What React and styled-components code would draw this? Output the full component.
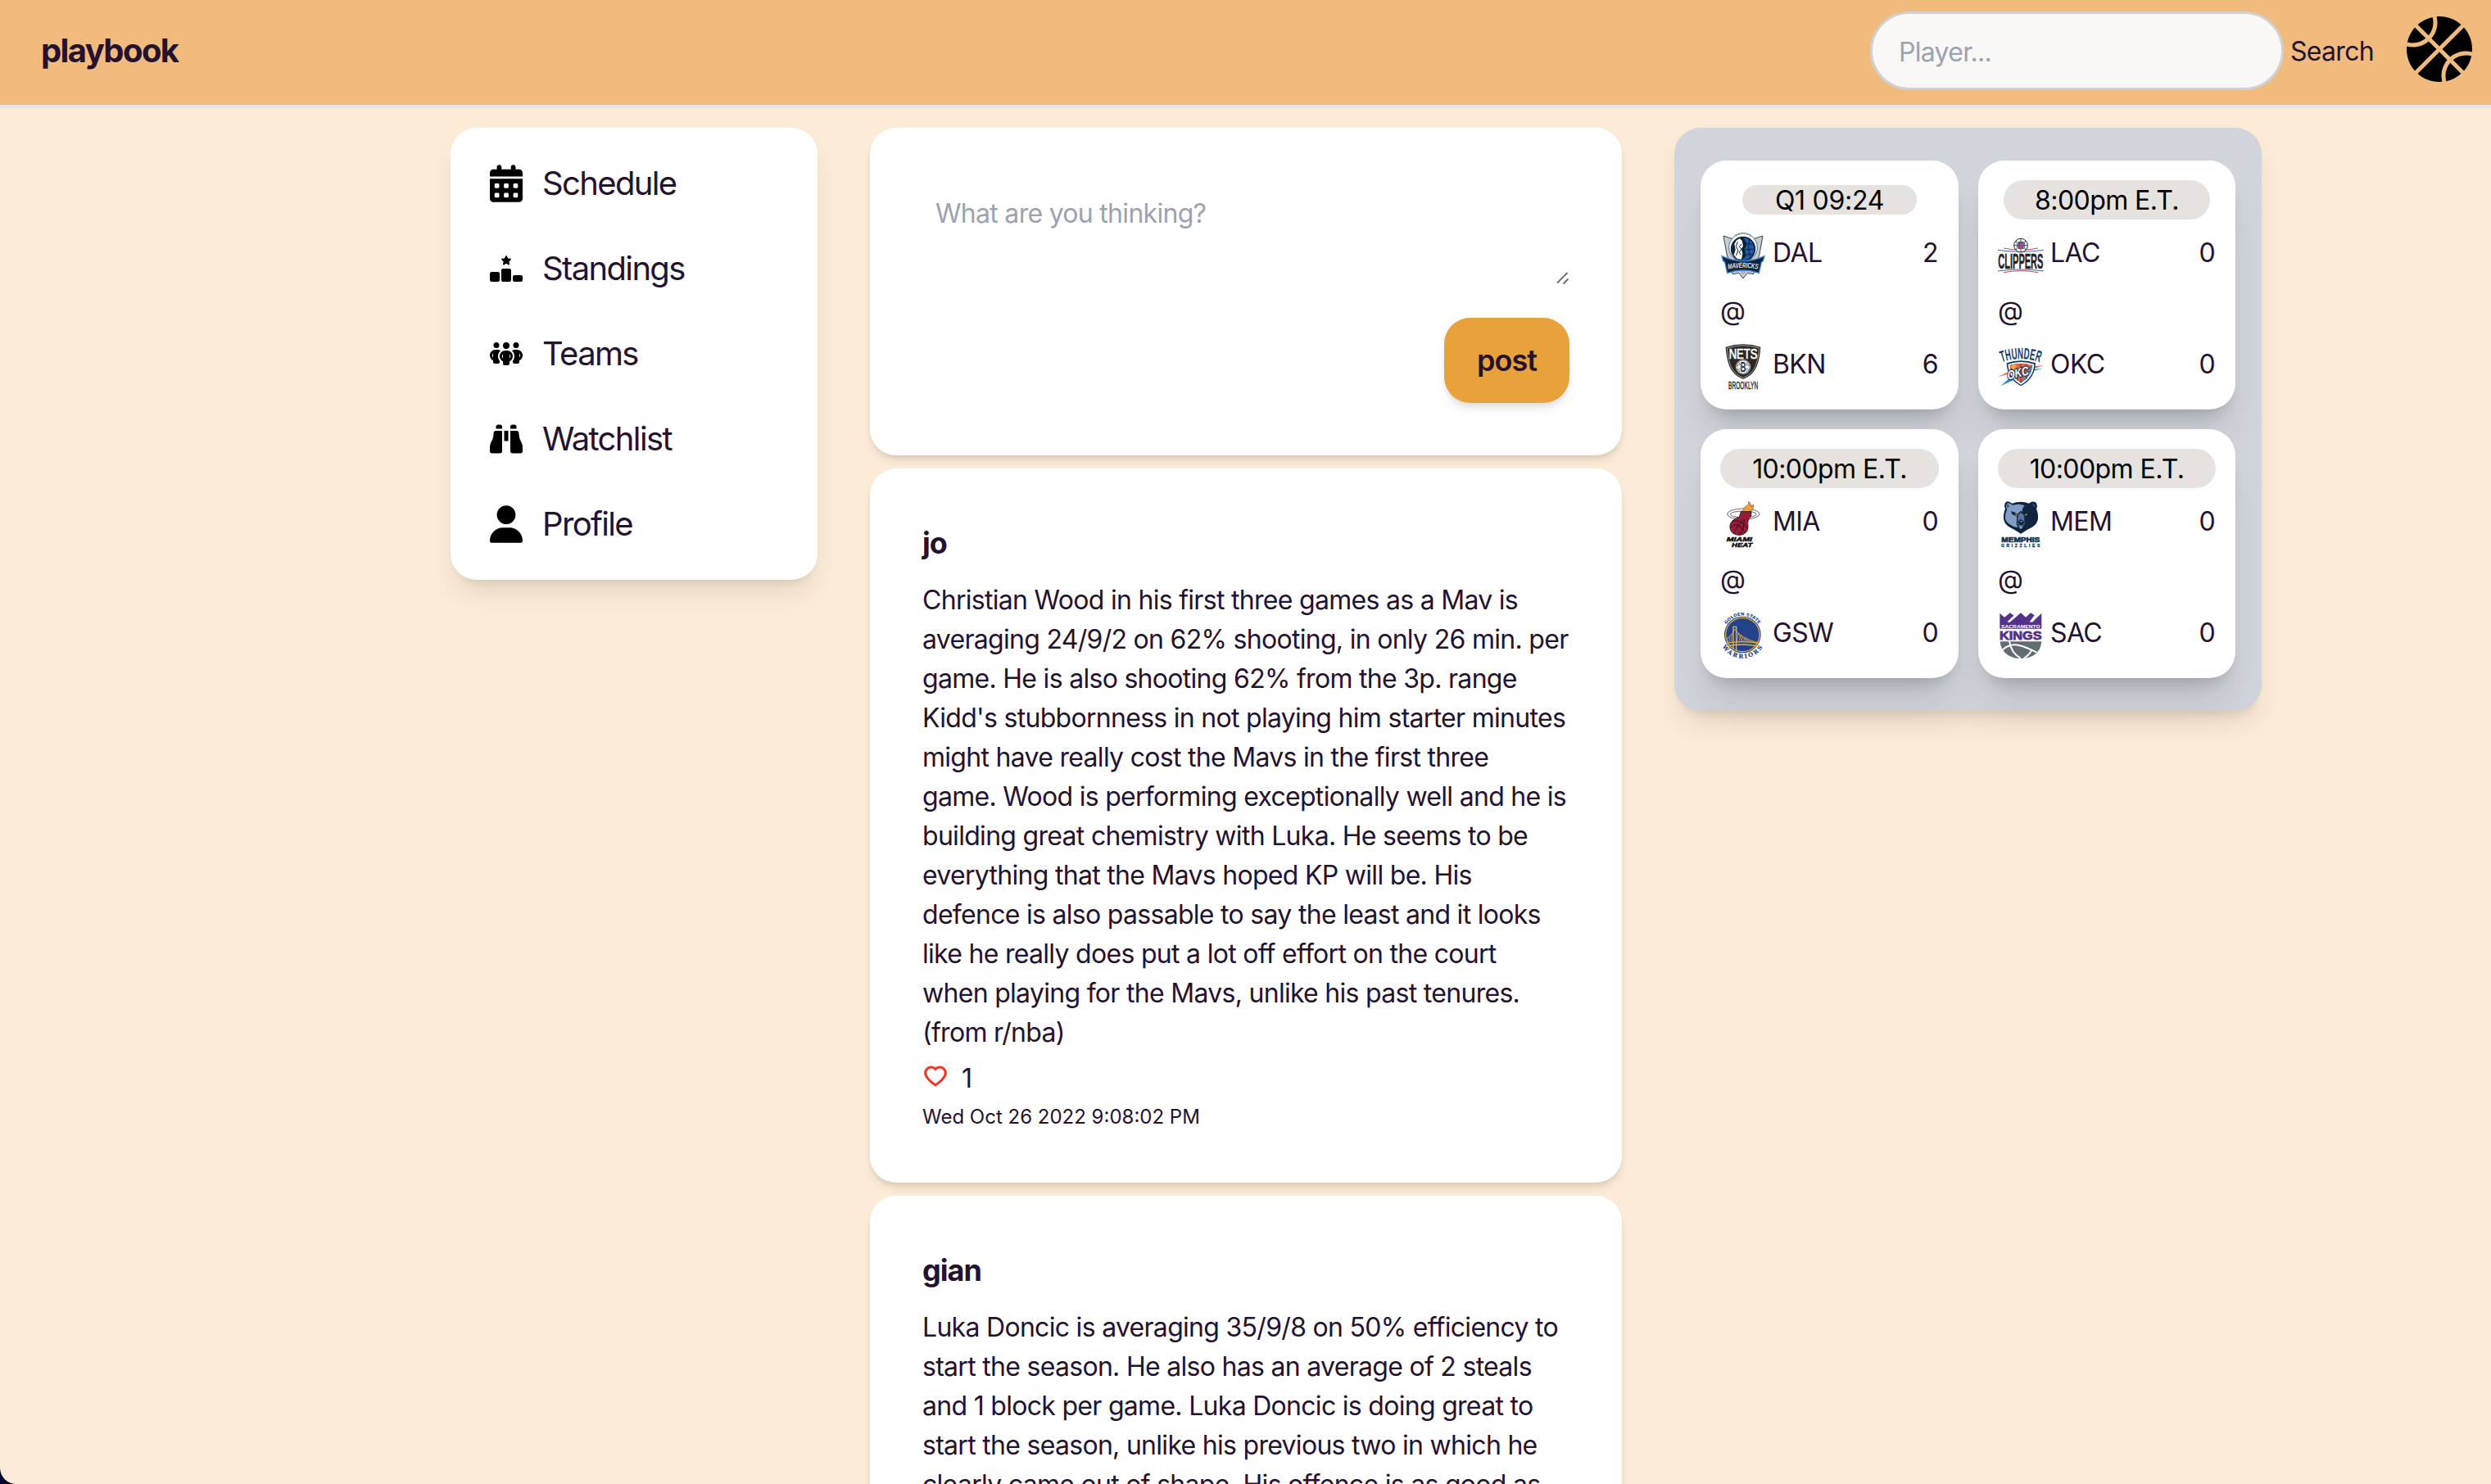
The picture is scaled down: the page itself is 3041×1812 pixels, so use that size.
import React from 'react';
import styled, { createGlobalStyle, css } from 'styled-components';
import {
  FaCalendarDays,
  FaRankingStar,
  FaPeopleGroup,
  FaBinoculars,
  FaUser,
  FaBasketball,
} from 'react-icons/fa6';
import { AiOutlineHeart } from 'react-icons/ai';

const ink = '#24122f';

const GlobalStyle = createGlobalStyle`
  *, *::before, *::after { box-sizing: border-box; }
  html { background: #0a0530; }
  body {
    margin: 0;
    overflow: hidden;
    color: ${ink};
    font-family: Inter, "Liberation Sans", sans-serif;
    font-size: 32px;
    line-height: 48px;
    letter-spacing: -0.022em;
  }
`;

const Page = styled.div`
  height: 1812px;
  overflow: hidden;
  background: #fcecd7;
  border-bottom-left-radius: 20px;
`;

const Header = styled.header`
  display: flex;
  align-items: center;
  justify-content: space-between;
  height: 132px;
  padding: 0 23px 4px 50px;
  background: #f2bb7e;
  border-bottom: 4px solid #e5e7eb;
`;

const Brand = styled.h1`
  margin: 0;
  font-size: 40px;
  line-height: 56px;
  font-weight: 700;
  letter-spacing: -0.04em;
`;

const SearchForm = styled.form`
  display: flex;
  align-items: center;
`;

const SearchInput = styled.input`
  width: 505px;
  height: 96px;
  margin-right: 8px;
  padding: 2px 32px 0;
  border: 3px solid #d1d1d4;
  border-radius: 50px;
  background: #f9f8f6;
  color: inherit;
  font: inherit;
  letter-spacing: inherit;
  &::placeholder { color: #9ca3af; opacity: 1; }
`;

const SearchButton = styled.button`
  width: 101px;
  margin-right: 41px;
  padding: 2px 0 0;
  border: 0;
  background: none;
  color: inherit;
  font: inherit;
  letter-spacing: inherit;
  text-align: left;
`;

const BallIcon = styled(FaBasketball)`
  width: 80px;
  height: 80px;
  margin-top: -4px;
  color: #000;
`;

const Main = styled.main`
  display: flex;
  align-items: flex-start;
  gap: 64px;
  padding: 24px 0 0 550px;
`;

const surface = css`
  background: #fff;
  border-radius: 32px;
`;

const Sidebar = styled.nav`
  ${surface}
  display: flex;
  flex-direction: column;
  gap: 48px;
  width: 448px;
  padding: 40px 48px;
  box-shadow: 0 20px 30px -6px rgba(0, 0, 0, 0.1), 0 8px 12px -8px rgba(0, 0, 0, 0.1);
`;

const NavItem = styled.a`
  display: flex;
  align-items: center;
  gap: 24px;
  height: 56px;
  font-size: 40px;
  line-height: 56px;
  letter-spacing: -0.041em;
  svg { width: 40px; height: ${(p) => p.$iconHeight}px; color: #000; }
`;

const Feed = styled.section`
  display: flex;
  flex-direction: column;
  gap: 16px;
  width: 918px;
`;

const Card = styled.article`
  ${surface}
  padding: 64px;
  box-shadow: 0 8px 12px -2px rgba(0, 0, 0, 0.1), 0 4px 8px -4px rgba(0, 0, 0, 0.1);
`;

const Composer = styled(Card)`
  display: flex;
  flex-direction: column;
  align-items: flex-end;
  height: 400px;
`;

const Field = styled.div`
  position: relative;
  width: 100%;
  height: 128px;
  margin-bottom: 40px;
`;

const PostInput = styled.textarea`
  display: block;
  width: 100%;
  height: 128px;
  padding: 17px 16px 15px;
  border: 0;
  resize: none;
  color: inherit;
  font: inherit;
  letter-spacing: inherit;
  background: none;
  &::placeholder { color: #9ca3af; opacity: 1; }
`;

const Grip = styled.svg`
  position: absolute;
  right: 0;
  bottom: 0;
`;

const PostButton = styled.button`
  width: 153px;
  height: 104px;
  padding: 0;
  border: 0;
  border-radius: 32px;
  background: #e8a13b;
  color: inherit;
  font-family: inherit;
  font-size: 36px;
  font-weight: 600;
  letter-spacing: -0.028em;
  box-shadow: 0 8px 12px -2px rgba(0, 0, 0, 0.1), 0 4px 8px -4px rgba(0, 0, 0, 0.1);
`;

const Author = styled.h2`
  margin: -1px 0 18px;
  font-size: 36px;
  line-height: 56px;
  font-weight: 700;
  letter-spacing: -0.028em;
`;

const Body = styled.p`
  margin: 0;
  white-space: pre;
`;

const Likes = styled.div`
  display: flex;
  align-items: center;
  gap: 16px;
  margin: 8px 0 7px;
  svg {
    width: 32px;
    height: 32px;
    margin-top: -6px;
    color: #ef3326;
    stroke-width: 24px;
  }
`;

const Time = styled.time`
  display: block;
  font-size: 24px;
  line-height: 32px;
  letter-spacing: 0;
`;

const Scoreboard = styled.aside`
  display: grid;
  grid-template-columns: 315px 314px;
  gap: 24px;
  width: 717px;
  padding: 40px 32px;
  border-radius: 32px;
  background: #d1d5db;
  box-shadow: 0 20px 30px -6px rgba(0, 0, 0, 0.1), 0 8px 12px -8px rgba(0, 0, 0, 0.1);
  letter-spacing: -0.018em;
`;

const Game = styled.div`
  ${surface}
  display: flex;
  flex-direction: column;
  gap: 16px;
  height: 304px;
  padding: 24px;
  box-shadow: 0 40px 50px -10px rgba(0, 0, 0, 0.1), 0 16px 20px -12px rgba(0, 0, 0, 0.2);
`;

const Clock = styled.div`
  display: flex;
  align-items: center;
  justify-content: center;
  align-self: center;
  width: ${(p) => p.$width}px;
  height: ${(p) => (p.$live ? 36 : 48)}px;
  margin: ${(p) => (p.$live ? 6 : 0)}px 0;
  padding-top: 2px;
  border-radius: 24px;
  background: #e5e2df;
  color: #000;
  letter-spacing: ${(p) => (p.$live ? '-0.009em' : '-0.018em')};
  white-space: nowrap;
`;

const TeamRow = styled.div`
  display: flex;
  align-items: flex-start;
  height: 56px;
`;

const TeamName = styled.span`
  flex: 1;
  margin: 1px 0 0 8px;
`;

const Score = styled.span`
  margin: 1px 1px 0 0;
`;

const Logo = styled.svg`
  width: 56px;
  height: 56px;
  overflow: visible;
  letter-spacing: 0;
`;

const LogoFrame = ({ children }) => <Logo viewBox="0 0 168 168">{children}</Logo>;

const condensed = '"Liberation Sans", sans-serif';

const Mavericks = () => (
  <LogoFrame>
    <path d="M12 12L42 22H126L156 12L144 78L122 152L100 148L84 168L68 148L46 152L24 78Z" fill="#c4ced4" stroke="#2b4450" strokeWidth="3" />
    <circle cx="84" cy="54" r="52" fill="#fff" stroke="#3d525d" strokeWidth="2.5" />
    <path id="dalArc" d="M50 22A44 44 0 0 1 118 22" fill="none" />
    <text fontFamily={condensed} fontSize="10" fontWeight="700" fill="#5d7078"><textPath href="#dalArc" startOffset="50%" textAnchor="middle" textLength="58">DALLAS</textPath></text>
    <circle cx="84" cy="60" r="43" fill="#1c5bab" stroke="#0c2340" strokeWidth="5" />
    <path d="M84 17A43 43 0 0 0 78 102L94 86L90 60L98 42L90 28Z" fill="#0b2230" />
    <path d="M72 22L80 30L84 48L78 60L82 78L78 98L62 96L50 82L56 62L52 42L60 28Z" fill="#fff" />
    <path d="M64 34L58 50L66 66L58 84M78 42L70 52L78 60L70 72L76 82" fill="none" stroke="#0b2230" strokeWidth="3" />
    <path d="M94 40Q112 38 124 48M94 62L127 60M94 82Q108 76 122 82M108 26Q98 54 112 96" fill="none" stroke="#0c2340" strokeWidth="3" />
    <path d="M6 86Q84 122 162 86L157 104L151 108L142 148Q84 128 26 148L17 108L11 104Z" fill="#0c2340" stroke="#3e83d0" strokeWidth="4" />
    <path id="dalBase" d="M29 134Q84 124 141 134" fill="none" />
    <text fontFamily={condensed} fontSize="27" fontWeight="700" fontStyle="italic" fill="#dfe6ea"><textPath href="#dalBase" textLength="110" lengthAdjust="spacingAndGlyphs">MAVERICKS</textPath></text>
    <circle cx="84" cy="146" r="5" fill="none" stroke="#6d7d86" strokeWidth="2" />
  </LogoFrame>
);

const Nets = () => (
  <LogoFrame>
    <path d="M20 11Q84-9 148 11Q146 50 134 82Q120 116 84 129Q48 116 34 82Q22 50 20 11Z" fill="#2b2823" />
    <path d="M25 15Q84-4 143 15Q141 50 130 80Q116 112 84 124Q52 112 38 80Q27 50 25 15Z" fill="none" stroke="#fff" strokeWidth="1.6" />
    <text x="84" y="53" textAnchor="middle" textLength="104" lengthAdjust="spacingAndGlyphs" fontFamily={condensed} fontSize="49" fill="#fff" stroke="#fff" strokeWidth="2">NETS</text>
    <circle cx="84" cy="84" r="27" fill="#fff" />
    <circle cx="84" cy="84" r="24" fill="none" stroke="#2b2823" strokeWidth="2" />
    <path d="M60 80Q84 66 108 80M61 96Q84 80 107 96M67 66Q84 86 69 102M101 66Q84 86 99 102" fill="none" stroke="#2b2823" strokeWidth="2" />
    <rect x="74" y="63" width="20" height="42" fill="#fff" />
    <text x="84" y="101" textAnchor="middle" textLength="20" lengthAdjust="spacingAndGlyphs" fontFamily={condensed} fontSize="48" fontWeight="700" fill="#2b2823">B</text>
    <text x="30" y="166" textLength="109" lengthAdjust="spacingAndGlyphs" fontFamily={condensed} fontSize="41" fill="#2b2823" stroke="#2b2823" strokeWidth="1.3">BROOKLYN</text>
  </LogoFrame>
);

const Clippers = () => (
  <LogoFrame>
    <path d="M0 64Q84 76 168 64M0 141Q84 129 168 141" fill="none" stroke="#3c68b5" strokeWidth="3" />
    <path d="M21 57Q84 70 147 57M21 146Q84 134 147 146" fill="none" stroke="#dc3d55" strokeWidth="3" />
    <circle cx="84" cy="47" r="25" fill="#fff" stroke="#242424" strokeWidth="3" />
    <path d="M84 22V72M59 47H109M66 30Q78 47 66 64M102 30Q90 47 102 64" fill="none" stroke="#242424" strokeWidth="2.5" />
    <rect x="74" y="33" width="21" height="27" fill="#2456ad" />
    <text x="85" y="56" textAnchor="middle" textLength="15" lengthAdjust="spacingAndGlyphs" fontFamily={condensed} fontSize="25" fontWeight="700" fill="#ef3a54" stroke="#ef3a54">B</text>
    <text x="1" y="131" textLength="165" lengthAdjust="spacingAndGlyphs" fontFamily={condensed} fontSize="78" fontWeight="700" fill="#242424" stroke="#242424" strokeWidth="1.5">CLIPPERS</text>
  </LogoFrame>
);

const Thunder = () => (
  <LogoFrame>
    <path id="okcArc" d="M14 67Q84 43 154 67" fill="none" />
    <text fontFamily={condensed} fontSize="58" fontWeight="700" fill="#143f70"><textPath href="#okcArc" textLength="142" lengthAdjust="spacingAndGlyphs">THUNDER</textPath></text>
    <path d="M2 119L40 101L36 111Z M168 79L128 82L132 90Z" fill="#ef6540" />
    <path d="M10 154L46 122L58 132Z M164 90L130 92L126 100Z" fill="#3288cd" />
    <path d="M32 70Q84 52 138 70Q136 128 84 154Q34 128 32 70Z" fill="#123a67" />
    <path d="M37 74Q84 58 133 74Q130 124 84 149Q40 124 37 74Z" fill="#fff" />
    <path d="M43 78Q84 64 127 78Q124 120 84 143Q46 120 43 78Z" fill="#ed6239" />
    <path d="M121 77L127 78Q124 120 84 143L80 140Q116 116 121 77Z" fill="#3288cd" />
    <path d="M48 76Q76 92 72 134M84 72V142M48 90Q88 118 122 84M104 74Q92 94 106 128" fill="none" stroke="#5b2c3b" strokeWidth="2.5" />
    <path d="M46 82L56 76L70 80L58 100Z" fill="#f5ab3d" />
    <text transform="translate(35 131) rotate(-13) skewX(-12)" textLength="80" lengthAdjust="spacingAndGlyphs" fontFamily={condensed} fontSize="45" fontWeight="700" fill="#fff" stroke="#123a67" strokeWidth="7" paintOrder="stroke">OKC</text>
  </LogoFrame>
);

const Heat = () => (
  <LogoFrame>
    <ellipse cx="85" cy="47" rx="59" ry="20" fill="#fff" stroke="#26363b" strokeWidth="2.2" />
    <ellipse cx="85" cy="48" rx="48" ry="12" fill="#fff" stroke="#26363b" strokeWidth="2.2" />
    <path d="M84 32Q88 20 98 16Q106 12 104 1Q114 6 109 17L116 14L115 20L122 12Q125 24 114 36L84 40Z" fill="#f3a02f" stroke="#6b2b20" strokeWidth="1.5" />
    <path d="M76 38H114L113 56Q98 66 102 92C103 112 88 124 69 124C46 124 34 108 36 90C37 72 58 62 70 58Z" fill="#991b38" stroke="#210e18" strokeWidth="2.5" />
    <path d="M42 74Q70 62 100 98M36 98Q64 68 92 116M48 118Q66 84 84 68M70 124Q88 104 88 66" fill="none" stroke="#210e18" strokeWidth="2.5" />
    <text x="23" y="147" textLength="94" lengthAdjust="spacingAndGlyphs" fontFamily={condensed} fontSize="23" fontWeight="700" fontStyle="italic" fill="#0b0b0b" stroke="#0b0b0b" strokeWidth="1.4">MIAMI</text>
    <text x="42" y="168" textLength="76" lengthAdjust="spacingAndGlyphs" fontFamily={condensed} fontSize="23" fontWeight="700" fontStyle="italic" fill="#0b0b0b" stroke="#0b0b0b" strokeWidth="1.4">HEAT</text>
    <path d="M114 152L121 146L118 151Z" fill="#0b0b0b" />
  </LogoFrame>
);

const Warriors = () => (
  <LogoFrame>
    <path id="gswTop" d="M23 43A70 70 0 0 1 141 43" fill="none" />
    <path id="gswBottom" d="M8 125A86 86 0 0 0 156 125" fill="none" />
    <circle cx="82" cy="81" r="67" fill="#22428a" />
    <circle cx="82" cy="81" r="62" fill="#22428a" stroke="#f0b63b" strokeWidth="3.5" />
    <path d="M48 132V52H59V138M22 112Q80 102 142 112M26 122Q80 112 136 122" fill="none" stroke="#e8b13d" strokeWidth="4" />
    <path d="M22 96Q42 88 52 60Q78 94 136 110" fill="none" stroke="#e8b13d" strokeWidth="3" />
    <path d="M28 94V111M35 88V110M42 78V109M66 76L60 108M74 84L68 108M82 90L76 108M90 95L84 108M98 99L93 108M106 102L102 109M114 105L111 110M64 72L82 107M74 84L98 108M88 94L112 110" stroke="#e8b13d" strokeWidth="2.2" />
    <text fontFamily='"DejaVu Sans", sans-serif' fontSize="15.5" fontWeight="700" fill="#22428a"><textPath href="#gswTop" textLength="139" lengthAdjust="spacingAndGlyphs">GOLDEN STATE</textPath></text>
    <text fontFamily='"DejaVu Serif", serif' fontSize="21" fontWeight="700" fill="#22428a" stroke="#22428a" strokeWidth=".6"><textPath href="#gswBottom" textLength="176">WARRIORS</textPath></text>
  </LogoFrame>
);

const Grizzlies = () => (
  <LogoFrame>
    <path d="M30 2Q40-3 52 8Q84-4 114 8Q126-3 138 4Q148 16 141 28Q150 50 146 70Q140 92 108 104L84 119L60 104Q28 92 22 70Q18 50 27 28Q20 14 30 2Z" fill="#10243f" />
    <path d="M34 8Q42 4 50 13L56 14Q84 8 98 16Q86 28 90 42L76 84L70 96Q38 88 28 68Q24 50 34 30Q26 16 34 8Z" fill="#809dc4" />
    <path d="M32 12Q42 8 42 20L34 25Z M126 10Q140 12 134 24Z" fill="#3f5677" />
    <path d="M48 36L64 42L76 52L70 56L52 48Z M120 34L104 42L94 52L100 56L116 46Z" fill="#10243f" />
    <path d="M60 46L73 50L68 53Z M109 45L96 50L102 53Z" fill="#f7c844" />
    <path d="M72 50L84 38L98 50L100 84L84 106L70 84Z" fill="#5874a0" stroke="#10243f" strokeWidth="4" />
    <path d="M73 74L84 66L97 74L92 88H78Z" fill="#10243f" />
    <path d="M80 72H90L87 78Z M76 94Q84 90 92 94L84 103Z" fill="#809dc4" />
    <text x="13" y="149" textLength="141" lengthAdjust="spacingAndGlyphs" fontFamily={condensed} fontSize="27" fontWeight="700" fill="#182f4a" stroke="#182f4a" strokeWidth="2">MEMPHIS</text>
    <text x="12" y="167" textLength="142" fontFamily={condensed} fontSize="15" fontWeight="700" fill="#182f4a" stroke="#182f4a" strokeWidth=".8">GRIZZLIES</text>
  </LogoFrame>
);

const Kings = () => (
  <LogoFrame>
    <path d="M7 2L24 17L45 1L58 11L34 34L43 36L84 1L102 17L120 1L134 10L116 34L126 35L160 2V59H7Z" fill="#56318a" />
    <text x="12" y="57" textLength="143" lengthAdjust="spacingAndGlyphs" fontFamily={condensed} fontSize="16" fontWeight="700" fill="#fff">SACRAMENTO</text>
    <text x="6" y="99" textLength="155" lengthAdjust="spacingAndGlyphs" fontFamily={condensed} fontSize="45" fontWeight="700" fill="#56318a" stroke="#56318a" strokeWidth="2.5">KINGS</text>
    <path d="M8 106H160Q158 138 132 156Q106 170 84 168Q58 170 34 154Q10 136 8 106Z" fill="#626c73" />
    <path d="M42 104Q48 148 84 168M18 136Q44 112 78 120Q104 126 142 146M94 168Q112 158 124 138" fill="none" stroke="#fff" strokeWidth="6" />
  </LogoFrame>
);

const navItems = [
  { label: 'Schedule', Icon: FaCalendarDays, iconHeight: 46 },
  { label: 'Standings', Icon: FaRankingStar, iconHeight: 32 },
  { label: 'Teams', Icon: FaPeopleGroup, iconHeight: 32 },
  { label: 'Watchlist', Icon: FaBinoculars, iconHeight: 40 },
  { label: 'Profile', Icon: FaUser, iconHeight: 46 },
];

const posts = [
  {
    author: 'jo',
    likes: 1,
    time: 'Wed Oct 26 2022 9:08:02 PM',
    text: [
      'Christian Wood in his first three games as a Mav is',
      'averaging 24/9/2 on 62% shooting, in only 26 min. per',
      'game. He is also shooting 62% from the 3p. range',
      "Kidd's stubbornness in not playing him starter minutes",
      'might have really cost the Mavs in the first three',
      'game. Wood is performing exceptionally well and he is',
      'building great chemistry with Luka. He seems to be',
      'everything that the Mavs hoped KP will be. His',
      'defence is also passable to say the least and it looks',
      'like he really does put a lot off effort on the court',
      'when playing for the Mavs, unlike his past tenures.',
      '(from r/nba)',
    ],
  },
  {
    author: 'gian',
    text: [
      'Luka Doncic is averaging 35/9/8 on 50% efficiency to',
      'start the season. He also has an average of 2 steals',
      'and 1 block per game. Luka Doncic is doing great to',
      'start the season, unlike his previous two in which he',
      'clearly came out of shape. His offence is as good as',
    ],
  },
];

const games = [
  { clock: 'Q1 09:24', live: true, width: 213, away: ['DAL', Mavericks, 2], home: ['BKN', Nets, 6] },
  { clock: '8:00pm E.T.', width: 252, away: ['LAC', Clippers, 0], home: ['OKC', Thunder, 0] },
  { clock: '10:00pm E.T.', width: 267, away: ['MIA', Heat, 0], home: ['GSW', Warriors, 0] },
  { clock: '10:00pm E.T.', width: 266, away: ['MEM', Grizzlies, 0], home: ['SAC', Kings, 0] },
];

const Team = ({ team: [name, Mark, score] }) => (
  <TeamRow>
    <Mark />
    <TeamName>{name}</TeamName>
    <Score>{score}</Score>
  </TeamRow>
);

export default function App() {
  return (
    <>
      <GlobalStyle />
      <Page>
        <Header>
          <Brand>playbook</Brand>
          <SearchForm>
            <SearchInput placeholder="Player..." />
            <SearchButton type="button">Search</SearchButton>
            <BallIcon />
          </SearchForm>
        </Header>
        <Main>
          <Sidebar>
            {navItems.map(({ label, Icon, iconHeight }) => (
              <NavItem key={label} $iconHeight={iconHeight}>
                <Icon />
                <span>{label}</span>
              </NavItem>
            ))}
          </Sidebar>
          <Feed>
            <Composer as="form">
              <Field>
                <PostInput placeholder="What are you thinking?" />
                <Grip width="16" height="16" viewBox="0 0 16 16">
                  <path d="M1 13.5L13.5 1M8.5 14.5L14.5 8.5" stroke="#6b6b6b" strokeWidth="1.8" />
                </Grip>
              </Field>
              <PostButton type="button">post</PostButton>
            </Composer>
            {posts.map((post) => (
              <Card key={post.author}>
                <Author>{post.author}</Author>
                <Body>{post.text.join('\n')}</Body>
                {post.time && (
                  <>
                    <Likes>
                      <AiOutlineHeart />
                      <span>{post.likes}</span>
                    </Likes>
                    <Time>{post.time}</Time>
                  </>
                )}
              </Card>
            ))}
          </Feed>
          <Scoreboard>
            {games.map((game) => (
              <Game key={game.away[0]}>
                <Clock $width={game.width} $live={game.live}>{game.clock}</Clock>
                <Team team={game.away} />
                <div>@</div>
                <Team team={game.home} />
              </Game>
            ))}
          </Scoreboard>
        </Main>
      </Page>
    </>
  );
}
